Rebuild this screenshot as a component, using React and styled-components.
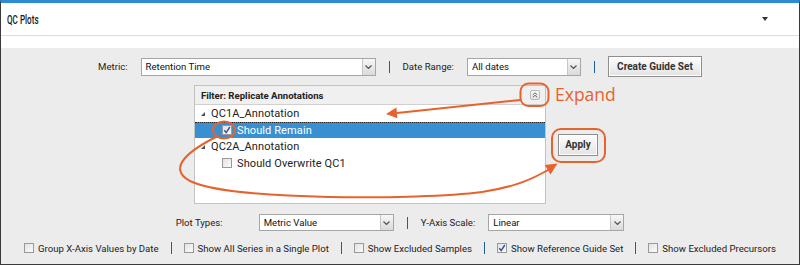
import React from 'react';
import styled, { createGlobalStyle } from 'styled-components';

const ORANGE = '#e8622c';

const GlobalStyle = createGlobalStyle`
  html, body { margin: 0; padding: 0; background: #fff; }
  body { font-family: Roboto, "Liberation Sans", sans-serif; color: #222; }
`;

const Frame = styled.div`
  position: relative;
  width: 800px;
  height: 265px;
  box-sizing: border-box;
  border: 1px solid #3a3a3a;
  border-top: 3px solid #2b8bd5;
  display: flex;
  flex-direction: column;
  background: #fff;
  overflow: hidden;
`;

const Header = styled.div`
  height: 33px;
  flex: none;
  box-sizing: border-box;
  border-bottom: 1px solid #dcdcdc;
  display: flex;
  align-items: center;
  justify-content: space-between;
  padding: 0 31px 0 6px;
`;

const Title = styled.span`
  font-size: 13.5px;
  font-weight: 500;
  color: #1a1a1a;
  transform: scaleX(0.6);
  transform-origin: left center;
  margin-top: -1px;
`;

const Caret = styled.span`
  width: 0;
  height: 0;
  border-left: 3px solid transparent;
  border-right: 3px solid transparent;
  border-top: 4px solid #333;
  margin-top: -1px;
`;

const Spacer = styled.div`
  height: 12px;
  flex: none;
`;

const Body = styled.div`
  flex: 1;
  background: #ececec;
  display: flex;
  flex-direction: column;
  align-items: center;
  padding-top: 8px;
`;

const Row = styled.div`
  display: flex;
  align-items: center;
  gap: ${p => p.$gap || 13}px;
  margin-top: ${p => p.$mt || 0}px;
  height: ${p => p.$h || 21}px;
`;

const Label = styled.span`
  font-size: 9.6px;
  color: #222;
  min-width: ${p => p.$w || 0}px;
  white-space: nowrap;
`;

const SelectBox = styled.div`
  display: flex;
  align-items: stretch;
  width: ${p => p.$w}px;
  height: ${p => p.$h || 18}px;
  box-sizing: border-box;
  border: 1px solid #a6a6a6;
  background: #fff;
`;

const SelectText = styled.span`
  flex: 1;
  padding-left: 4px;
  display: flex;
  align-items: center;
  font-size: 9.6px;
  color: #111;
`;

const SelectArrow = styled.span`
  width: 12px;
  border-left: 1px solid #c6c6c6;
  background: linear-gradient(#f7f7f7, #dadada);
  display: flex;
  align-items: center;
  justify-content: center;
`;

const Sep = styled.span`
  width: 1px;
  height: 12px;
  background: #1d5f97;
`;

const Button = styled.button`
  height: ${p => p.$h || 21}px;
  width: ${p => p.$w}px;
  box-sizing: border-box;
  border: 1px solid #8e8e8e;
  box-shadow: inset 0 0 0 1px #fff;
  background: linear-gradient(#fdfdfd, #e3e3e3);
  font-family: Roboto, "Liberation Sans", sans-serif;
  font-weight: 700;
  font-size: 10px;
  color: #333;
  padding: 0;
`;

const FilterSection = styled.div`
  display: flex;
  align-items: center;
  gap: 12px;
  margin-top: 8px;
  padding-right: 8px;
`;

const FilterPanel = styled.div`
  width: 352px;
  height: 119px;
  box-sizing: border-box;
  border: 1px solid #c2c2c2;
  background: #fff;
  display: flex;
  flex-direction: column;
`;

const FilterHeader = styled.div`
  height: 19px;
  flex: none;
  box-sizing: border-box;
  border-bottom: 1px solid #d0d0d0;
  background: #f0f0f0;
  display: flex;
  align-items: center;
  justify-content: space-between;
  padding: 0 5px 0 6px;
  font-weight: 700;
  font-size: 9.6px;
  color: #222;
`;

const ExpandBtn = styled.span`
  width: 10px;
  height: 10px;
  box-sizing: border-box;
  border: 1px solid #b9b9b9;
  border-radius: 2px;
  background: linear-gradient(#fafafa, #e4e4e4);
  display: flex;
  align-items: center;
  justify-content: center;
`;

const TreeRow = styled.div`
  height: 16.5px;
  box-sizing: border-box;
  display: flex;
  align-items: center;
  gap: 5px;
  padding-left: ${p => p.$indent}px;
  font-size: 11px;
  letter-spacing: 0.1px;
  color: ${p => (p.$selected ? '#fff' : '#222')};
  background: ${p => (p.$selected ? '#3890d3' : 'transparent')};
  border-top: 1px dotted ${p => (p.$selected ? '#222' : 'transparent')};
`;

const Twisty = styled.span`
  width: 0;
  height: 0;
  border-left: 4px solid transparent;
  border-bottom: 4px solid #505050;
  margin-right: 1px;
`;

const Box = styled.span`
  width: 10px;
  height: 10px;
  flex: none;
  box-sizing: border-box;
  border: 1px solid #999;
  background: linear-gradient(135deg, #e2e2e2, #fbfbfb);
  display: flex;
  align-items: center;
  justify-content: center;
`;

const CheckItem = styled.label`
  display: flex;
  align-items: center;
  gap: 4px;
  font-size: 9.6px;
  color: #222;
  white-space: nowrap;
`;

const Overlay = styled.svg`
  position: absolute;
  top: -3px;
  left: -1px;
  pointer-events: none;
`;

const Chevron = () => (
  <svg width="7" height="4" viewBox="0 0 7 4">
    <polyline points="0.5,0.5 3.5,3.5 6.5,0.5" fill="none" stroke="#555" strokeWidth="1.2" />
  </svg>
);

const Select = ({ w, h, value }) => (
  <SelectBox $w={w} $h={h}>
    <SelectText>{value}</SelectText>
    <SelectArrow><Chevron /></SelectArrow>
  </SelectBox>
);

const Checkbox = ({ checked }) => (
  <Box>
    {checked && (
      <svg width="8" height="8" viewBox="0 0 8 8">
        <polyline points="1.3,4.2 3.2,6.6 6.8,1" fill="none" stroke="#2f4f9a" strokeWidth="1.4" />
      </svg>
    )}
  </Box>
);

const bottomOptions = [
  { label: 'Group X-Axis Values by Date' },
  { label: 'Show All Series in a Single Plot' },
  { label: 'Show Excluded Samples' },
  { label: 'Show Reference Guide Set', checked: true },
  { label: 'Show Excluded Precursors' },
];

const Annotations = () => (
  <Overlay width="800" height="265" viewBox="0 0 800 265">
    <g fill="none" stroke={ORANGE} strokeWidth="2">
      <rect x="520.5" y="83.5" width="28" height="22.5" rx="8" />
      <line x1="520" y1="100" x2="397" y2="113" />
      <ellipse cx="224" cy="130" rx="11" ry="8.5" />
      <path d="M216 137 C 190 150, 166 168, 190 181 C 232 201, 420 200, 482 192 C 516 187, 534 178, 548 170" />
      <rect x="552" y="129" width="53" height="33" rx="9" />
    </g>
    <polygon points="386,114 397.4,118.3 396.4,107.6" fill={ORANGE} />
    <polygon points="557.5,163.5 550.5,174.5 544.8,165" fill={ORANGE} />
    <text x="555" y="101" fill={ORANGE} fontSize="17.5" fontFamily="'Open Sans', Roboto, sans-serif">Expand</text>
  </Overlay>
);

export default function App() {
  return (
    <>
      <GlobalStyle />
      <Frame>
        <Header>
          <Title>QC Plots</Title>
          <Caret />
        </Header>
        <Spacer />
        <Body>
          <Row>
            <Label>Metric:</Label>
            <Select w={235} value="Retention Time" />
            <Sep />
            <Label>Date Range:</Label>
            <Select w={114} value="All dates" />
            <Sep />
            <Button $w={94}>Create Guide Set</Button>
          </Row>

          <FilterSection>
            <FilterPanel>
              <FilterHeader>
                <span>Filter: Replicate Annotations</span>
                <ExpandBtn>
                  <svg width="6" height="6" viewBox="0 0 6 6">
                    <polyline points="0.8,2.8 3,0.8 5.2,2.8" fill="none" stroke="#666" strokeWidth="1" />
                    <polyline points="0.8,5.3 3,3.3 5.2,5.3" fill="none" stroke="#666" strokeWidth="1" />
                  </svg>
                </ExpandBtn>
              </FilterHeader>
              <TreeRow $indent={6}><Twisty />QC1A_Annotation</TreeRow>
              <TreeRow $indent={27} $selected><Checkbox checked />Should Remain</TreeRow>
              <TreeRow $indent={6}><Twisty />QC2A_Annotation</TreeRow>
              <TreeRow $indent={27}><Checkbox />Should Overwrite QC1</TreeRow>
            </FilterPanel>
            <Button $w={40} $h={22}>Apply</Button>
          </FilterSection>

          <Row $mt={10} $h={17} $gap={13}>
            <Label $w={70}>Plot Types:</Label>
            <Select w={135} h={17} value="Metric Value" />
            <Sep />
            <Label>Y-Axis Scale:</Label>
            <Select w={136} h={17} value="Linear" />
          </Row>

          <Row $mt={10} $h={14} $gap={12}>
            {bottomOptions.map((o, i) => (
              <React.Fragment key={o.label}>
                {i > 0 && <Sep />}
                <CheckItem>
                  <Checkbox checked={o.checked} />
                  {o.label}
                </CheckItem>
              </React.Fragment>
            ))}
          </Row>
        </Body>
        <Annotations />
      </Frame>
    </>
  );
}
